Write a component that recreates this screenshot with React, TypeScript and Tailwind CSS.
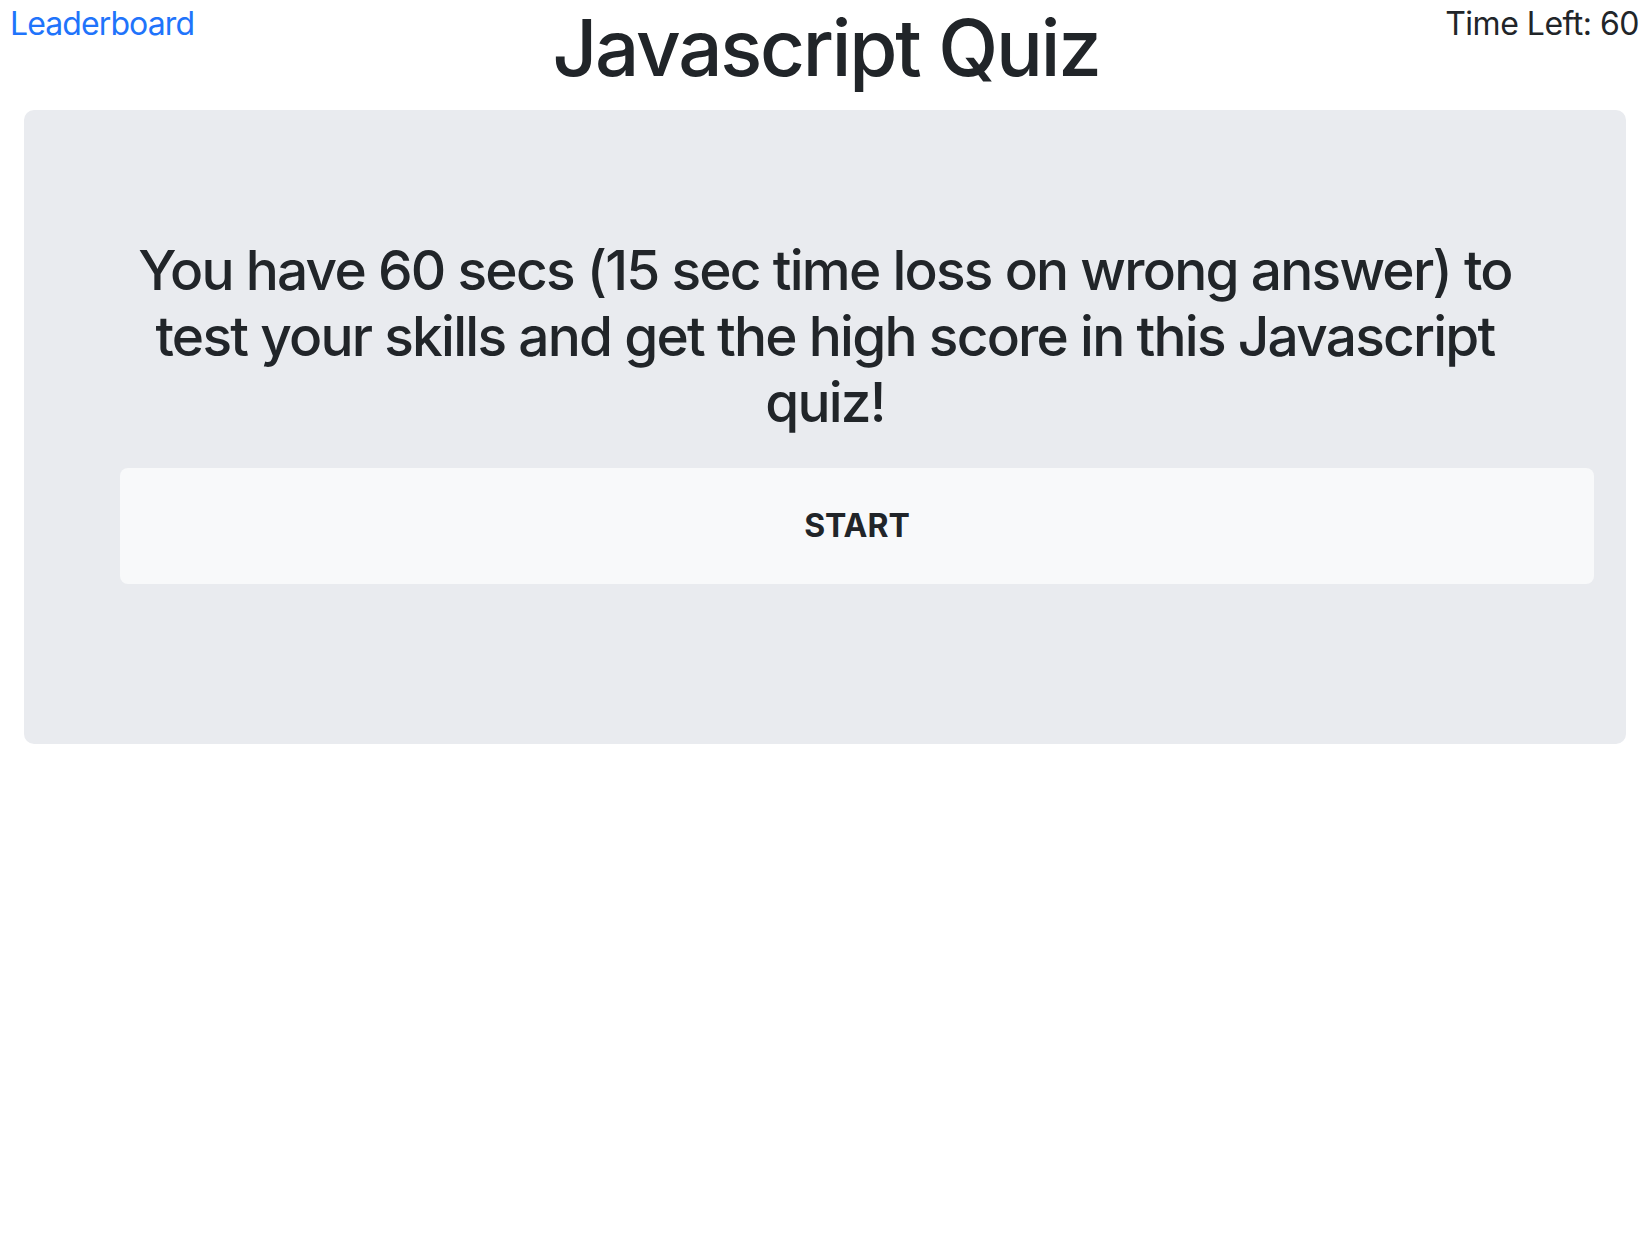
import React from 'react'

const App = () => {
  return (
    <div className="min-h-screen bg-white font-['Inter',sans-serif] text-[#212529]">
      {/* top bar */}
      <header className="grid grid-cols-[1fr_auto_1fr] items-start">
        <a href="#" className="justify-self-start pl-[10px] text-[32px] leading-[48px] tracking-[-0.9px] text-[#1f74fb]">
          Leaderboard
        </a>
        <h1 className="text-[78px] leading-[96px] font-medium tracking-[-2.2px]">Javascript Quiz</h1>
        <div className="justify-self-end pr-[13px] text-[32px] leading-[48px] tracking-[-0.5px]">Time Left: 60</div>
      </header>

      {/* intro card */}
      <main className="ml-[24px] mr-[26px] mt-[14px] rounded-[10px] bg-[#e9ebef] pt-[127px] pb-[160px]">
        <h2 className="mx-[96px] text-center text-[55px] leading-[66px] font-medium tracking-[-1.75px]">
          You have 60 secs (15 sec time loss on wrong answer) to test your skills and get the high score in this Javascript quiz!
        </h2>
        <div className="ml-[96px] mr-[32px] mt-[33px]">
          <button className="flex h-[116px] w-full items-center justify-center rounded-[8px] bg-[#f8f9fa] text-[32px] font-bold">
            START
          </button>
        </div>
      </main>
    </div>
  )
}

export default App
